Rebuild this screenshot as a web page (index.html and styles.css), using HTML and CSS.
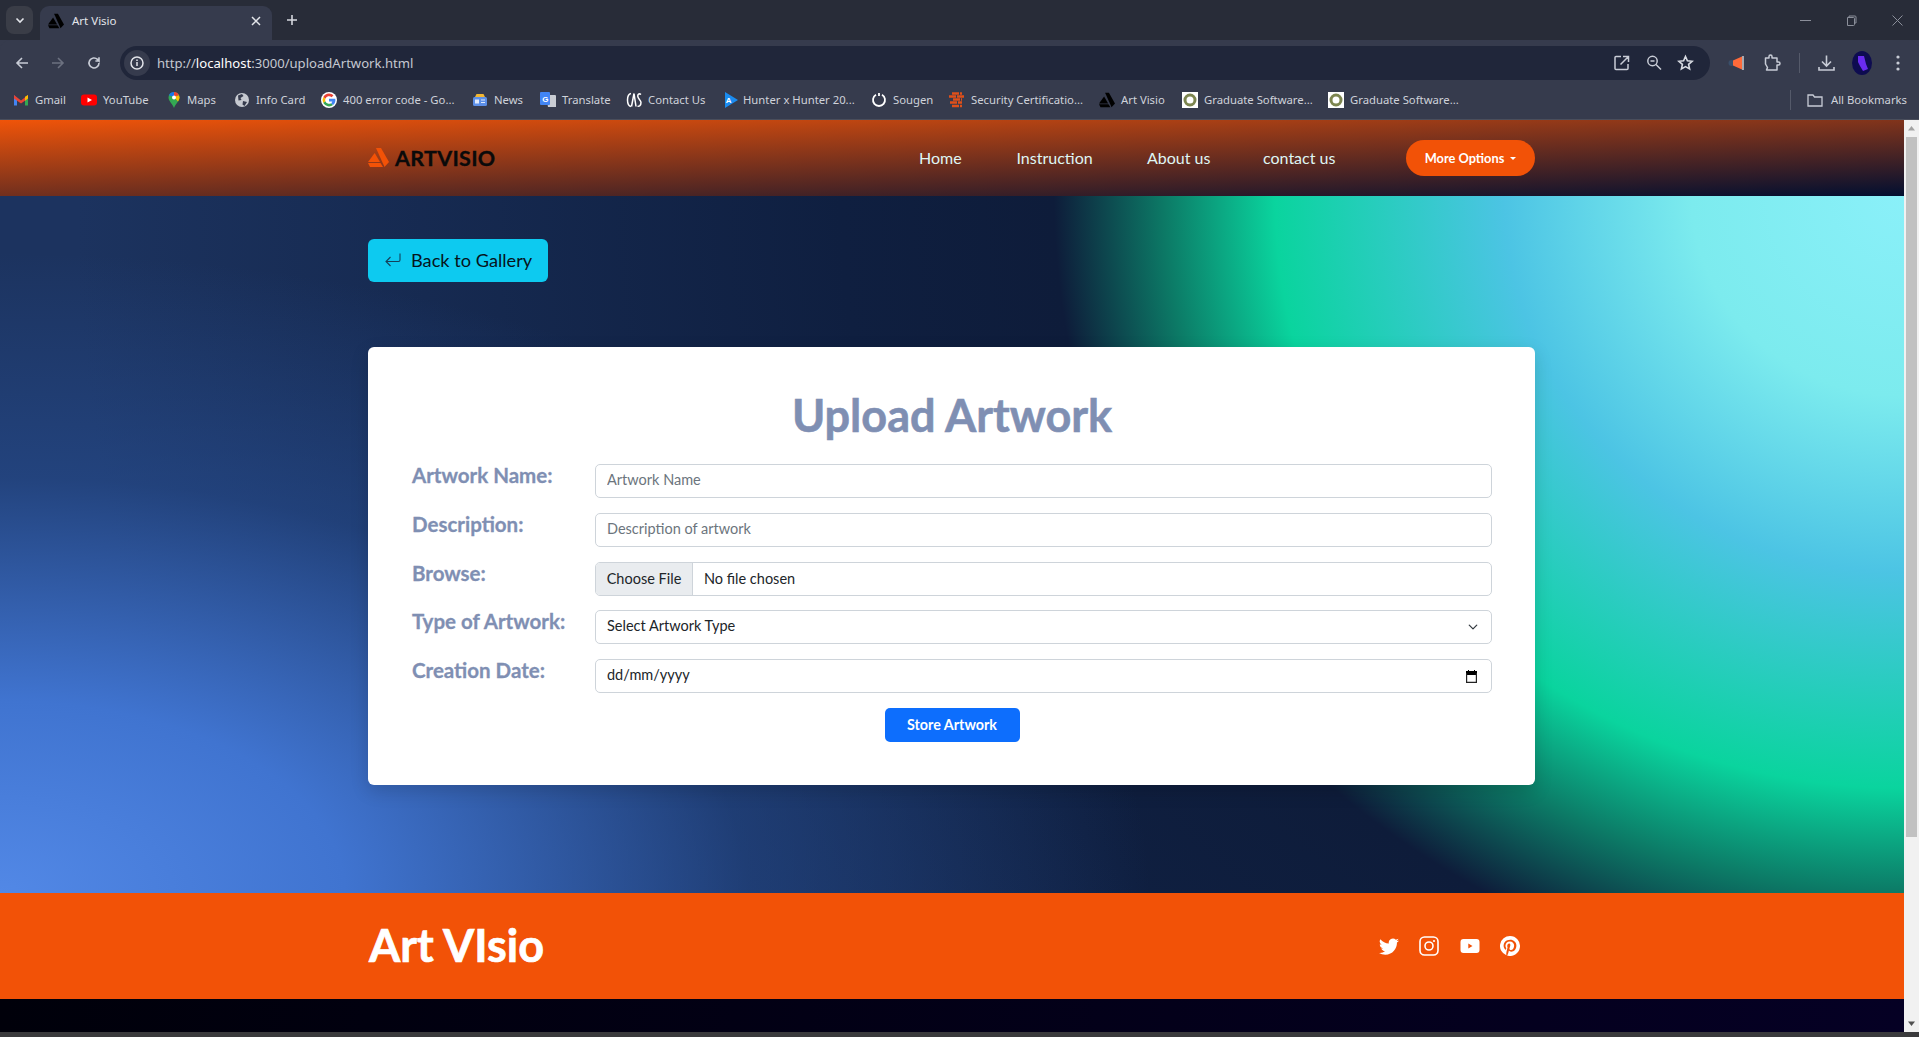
FILE: index.html
```html
<!DOCTYPE html>
<html lang="en">
<head>
<meta charset="utf-8">
<title>Art Visio</title>
<link rel="stylesheet" href="styles.css">
</head>
<body>
<div class="tabstrip">
  <div class="tabmenu"><svg width="12" height="12" viewBox="0 0 12 12"><path d="M2.5 4.5 6 8l3.5-3.5" fill="none" stroke="#e3e5ea" stroke-width="1.6"/></svg></div>
  <div class="tab">
    <svg class="fav" viewBox="0 0 21 19"><polygon points="8,0 13,0 21,14 16.5,19" fill="#000"/><polygon points="0,14 6.7,5 12,14" fill="#000"/><polygon points="0,15 12.5,15 15,19 2,19" fill="#000"/></svg>
    <span class="tabtitle">Art Visio</span>
    <svg class="tabclose" width="10" height="10" viewBox="0 0 10 10"><path d="M1 1l8 8M9 1l-8 8" stroke="#e3e5ea" stroke-width="1.5"/></svg>
  </div>
  <svg class="newtab" width="12" height="12" viewBox="0 0 12 12"><path d="M6 1v10M1 6h10" stroke="#d5d8de" stroke-width="1.6"/></svg>
  <div class="winctrls">
    <svg width="11" height="11" viewBox="0 0 11 11"><path d="M0 5.5h11" stroke="#8b8f9a"/></svg>
    <svg width="11" height="11" viewBox="0 0 11 11"><path d="M1.5 2.5h6a1 1 0 0 1 1 1v6a1 1 0 0 1-1 1h-6zM3 2.5V1h6a1 1 0 0 1 1 1v6H8.5" fill="none" stroke="#8b8f9a"/></svg>
    <svg width="11" height="11" viewBox="0 0 11 11"><path d="M.5.5l10 10M10.5.5l-10 10" stroke="#8b8f9a"/></svg>
  </div>
</div>
<div class="toolbar">
  <svg class="navicon" viewBox="0 0 16 16"><path d="M14 8H3M8 3 3 8l5 5" fill="none" stroke="#c8ccd6" stroke-width="1.6"/></svg>
  <svg class="navicon" viewBox="0 0 16 16"><path d="M2 8h11M8 3l5 5-5 5" fill="none" stroke="#6c7180" stroke-width="1.6"/></svg>
  <svg class="navicon" viewBox="0 0 16 16"><path d="M13 8a5 5 0 1 1-1.5-3.6L13 6V2.2M13 6H9.4" fill="none" stroke="#c8ccd6" stroke-width="1.6"/></svg>
  <div class="omnibox">
    <div class="siteinfo"><svg width="16" height="16" viewBox="0 0 16 16"><circle cx="8" cy="8" r="6" fill="none" stroke="#e2e4ea" stroke-width="1.5"/><path d="M8 7v4M8 4.6v1.4" stroke="#e2e4ea" stroke-width="1.5"/></svg></div>
    <span class="url"><span class="urldim">http://</span>localhost<span class="urldim">:3000/uploadArtwork.html</span></span>
    <div class="omniicons">
      <svg width="18" height="18" viewBox="0 0 18 18"><path d="M8 2.5H3a1 1 0 0 0-1 1v11a1 1 0 0 0 1 1h11a1 1 0 0 0 1-1V10M7.500 10.500 15.500 2.500M10 2.500h5.500V8" fill="none" stroke="#c8ccd6" stroke-width="1.5"/></svg>
      <svg width="16" height="18" viewBox="0 0 16 18"><circle cx="6.500" cy="7" r="4.700" fill="none" stroke="#c8ccd6" stroke-width="1.5"/><path d="M10 10.500l5 5M4.500 7h4" stroke="#c8ccd6" stroke-width="1.5"/></svg>
      <svg width="17" height="18" viewBox="0 0 17 18"><path d="M8.500 2.500l1.900 4.300 4.700.5-3.500 3.100 1 4.600-4.100-2.400-4.100 2.400 1-4.600L1.900 7.300l4.700-.5z" fill="none" stroke="#d8dbe2" stroke-width="1.6"/></svg>
    </div>
  </div>
  <div class="tools">
    <svg class="tool-mega" width="16" height="18" viewBox="0 0 16 18"><circle cx="3.500" cy="9" r="3" fill="#3a4f6a"/><path d="M5 6.500 14 2.500v13L5 11.500z" fill="#ff6a3a"/><path d="M15 2v14" stroke="#f2f2f2" stroke-width="1.200"/></svg>
    <svg class="tool-puzzle" width="17" height="18" viewBox="0 0 17 18"><path d="M1.500 4h3.500V2.500a1.500 1.500 0 0 1 3 0V4H13v4h1.500a1.500 1.500 0 0 1 0 3H13v5H2.500l1-2.500-2-3.500z" fill="none" stroke="#c8ccd6" stroke-width="1.500" stroke-linejoin="round"/></svg>
    <span class="tooldiv"></span>
    <svg class="tool-dl" width="17" height="18" viewBox="0 0 17 18"><path d="M8.500 1.500v10M4 7.500l4.500 4.500L13 7.500M1 13v3h15v-3" fill="none" stroke="#c8ccd6" stroke-width="1.600"/></svg>
    <svg class="tool-avatar" width="20" height="24" viewBox="0 0 20 24"><ellipse cx="10" cy="12" rx="10" ry="12" fill="#0e0c50"/><path d="M6 5h6l2 8 2 5-5 2-3-5-2-4z" fill="#6a2bf0"/></svg>
    <svg class="tool-dots" width="4" height="18" viewBox="0 0 4 18"><circle cx="2" cy="3" r="1.600" fill="#c8ccd6"/><circle cx="2" cy="9" r="1.600" fill="#c8ccd6"/><circle cx="2" cy="15" r="1.600" fill="#c8ccd6"/></svg>
  </div>
</div>
<div class="bookmarks">
  <div class="bmgrid">
    <a class="bm"><svg class="fav" viewBox="0 0 16 16"><path d="M1 3v10.500h3V7z" fill="#4285f4"/><path d="M15 3v10.500h-3V7z" fill="#34a853"/><path d="M1 3l7 5.500L15 3v3.500L8 11.500 1 6.500z" fill="#ea4335"/><path d="M12 4.800 15 3v3.500l-3 2.200z" fill="#fbbc04"/></svg><span>Gmail</span></a>
    <a class="bm"><svg class="fav" viewBox="0 0 16 16"><rect y="2.500" width="16" height="11" rx="3" fill="#f00"/><path d="M6.500 5.500v5L11 8z" fill="#fff"/></svg><span>YouTube</span></a>
    <a class="bm"><svg class="fav fav-pin" viewBox="2 0 13 16"><path d="M8 0a5.500 5.500 0 0 1 5.500 5.500C13.500 9 10 11 8 16 6 11 2.500 9 2.500 5.500A5.500 5.500 0 0 1 8 0z" fill="#34a853"/><path d="M3 3.300A5.500 5.500 0 0 1 8 0v5z" fill="#1a73e8"/><path d="M8 0a5.500 5.500 0 0 1 5 3.300L8 5z" fill="#ea4335"/><path d="M13.500 5.500c0 1.500-.7 2.800-1.500 4L8 5l5-1.700z" fill="#fbbc04"/><circle cx="8" cy="5.500" r="2" fill="#fff"/></svg><span>Maps</span></a>
    <a class="bm"><svg class="fav" viewBox="0 0 16 16"><circle cx="8" cy="8" r="7" fill="#c6c9d0"/><path d="M4 3.500 8 2l1.500 2-3 2 1 2-3 .5zM9 9l4 1-2.500 4-2-1.500z" fill="#363b4d"/></svg><span>Info Card</span></a>
    <a class="bm"><svg class="fav" viewBox="0 0 16 16"><circle cx="8" cy="8" r="8" fill="#fff"/><path d="M8 1.500a6.500 6.500 0 0 1 4.500 1.800l-1.900 1.900A3.800 3.800 0 0 0 4.400 6.800L2.300 5A6.500 6.500 0 0 1 8 1.500z" fill="#ea4335"/><path d="M2.300 5l2.100 1.800a3.800 3.800 0 0 0 0 2.400l-2.100 1.800a6.500 6.500 0 0 1 0-6z" fill="#fbbc05"/><path d="M2.300 11l2.100-1.800a3.800 3.800 0 0 0 5.700 2l2 1.700A6.500 6.500 0 0 1 2.300 11z" fill="#34a853"/><path d="M8 6.700h6.300a6.500 6.500 0 0 1-2.200 6.200l-2-1.700a2.700 2.700 0 0 0 1.200-1.800H8z" fill="#4285f4"/></svg><span>400 error code - Go...</span></a>
    <a class="bm"><svg class="fav" viewBox="0 0 16 16"><path d="M3 5 4.500 2h7L13 5z" fill="#f2b632"/><rect x="1" y="5" width="14" height="9" rx="1.500" fill="#5c8fe8"/><rect x="3" y="7.500" width="4" height="4" fill="#dfe9fb"/><path d="M9 8h4M9 10.500h4" stroke="#dfe9fb"/></svg><span>News</span></a>
    <a class="bm"><svg class="fav" viewBox="0 0 16 16"><path d="M6 3h9a1 1 0 0 1 1 1v11H8z" fill="#c9ccd3"/><rect width="10" height="13" rx="1" fill="#4285f4"/><text x="2.300" y="9.500" class="favtxt">G</text></svg><span>Translate</span></a>
    <a class="bm"><svg class="fav" viewBox="0 0 16 16"><path d="M5 1.500C2.500 2 1.500 5 1.500 8s1 6 3.500 6.500M5.500 14.500 8 1.500M8 1.500l2 13M15 2.500c-2-1.500-3.500 0-3.200 2 .3 2.500 3.200 3.500 3.200 6 0 3-2 4.500-3.500 3.500" fill="none" stroke="#fff" stroke-width="1.500"/></svg><span>Contact Us</span></a>
    <a class="bm bm-tight"><svg class="fav" viewBox="0 0 16 16"><path d="M2 0l13 8-13 8z" fill="#1a8cf0"/><text x="2.800" y="11" class="favtxt">A</text></svg><span>Hunter x Hunter 20...</span></a>
    <a class="bm"><svg class="fav" viewBox="0 0 16 16"><path d="M5 2.800a6 6 0 1 0 6 0" fill="none" stroke="#fff" stroke-width="1.800"/><path d="M8 1v3" stroke="#fff" stroke-width="1.800"/></svg><span>Sougen</span></a>
    <a class="bm"><svg class="fav" viewBox="0 0 16 16"><path d="M3 1.500h10M0 4.500h16M4 7.500h9M1 10.500h12M3 14h10" stroke="#e0501a" stroke-width="2.500" stroke-dasharray="7 1"/></svg><span>Security Certificatio...</span></a>
    <a class="bm"><svg class="fav" viewBox="0 0 21 19"><polygon points="8,0 13,0 21,14 16.500,19" fill="#000"/><polygon points="0,14 6.700,5 12,14" fill="#000"/><polygon points="0,15 12.500,15 15,19 2,19" fill="#000"/></svg><span>Art Visio</span></a>
    <a class="bm"><svg class="fav" viewBox="0 0 16 16"><rect width="16" height="16" fill="#fff"/><circle cx="8" cy="8" r="5" fill="none" stroke="#7d8650" stroke-width="3"/></svg><span>Graduate Software...</span></a>
    <a class="bm"><svg class="fav" viewBox="0 0 16 16"><rect width="16" height="16" fill="#fff"/><circle cx="8" cy="8" r="5" fill="none" stroke="#7d8650" stroke-width="3"/></svg><span>Graduate Software...</span></a>
  </div>
  <div class="allbm">
    <svg class="fav" viewBox="0 0 16 16"><path d="M1 3h5l1.500 2H15v9H1z" fill="none" stroke="#c8ccd6" stroke-width="1.300"/></svg>
    <span>All Bookmarks</span>
  </div>
</div>
<div class="viewport">
  <div class="page">
    <header class="navbar">
      <div class="wrap navwrap">
        <a class="logo">
          <svg width="21" height="19" viewBox="0 0 21 19"><polygon points="8,0 13,0 21,14 16.500,19" fill="#f25207"/><polygon points="0,14 6.700,5 12,14" fill="#f25207"/><polygon points="0,15 12.500,15 15,19 2,19" fill="#f25207"/></svg>
          <span>ARTVISIO</span>
        </a>
        <nav class="menu">
          <a class="m-home">Home</a>
          <a class="m-ins">Instruction</a>
          <a class="m-about">About us</a>
          <a class="m-contact">contact us</a>
        </nav>
        <button class="morebtn">More Options<i class="caret"></i></button>
      </div>
    </header>
    <main class="main">
      <div class="wrap">
        <a class="backbtn">
          <svg width="16" height="16" viewBox="0 0 16 16"><path d="M15 1.500V8a1.500 1.500 0 0 1-1.500 1.500H1M5.500 5 1 9.500 5.500 14" fill="none" stroke="#14405a" stroke-width="1.100"/></svg>
          <span>Back to Gallery</span>
        </a>
        <form class="card">
          <h1>Upload Artwork</h1>
          <div class="row"><label>Artwork Name:</label><input class="ctl" type="text" placeholder="Artwork Name"></div>
          <div class="row"><label>Description:</label><input class="ctl" type="text" placeholder="Description of artwork"></div>
          <div class="row"><label>Browse:</label><input class="ctl ctl-file" type="file"></div>
          <div class="row"><label>Type of Artwork:</label><select class="ctl ctl-select"><option>Select Artwork Type</option></select></div>
          <div class="row"><label>Creation Date:</label><input class="ctl ctl-date" type="text" value="dd/mm/yyyy"></div>
          <div class="actions"><button type="button" class="storebtn">Store Artwork</button></div>
        </form>
      </div>
    </main>
    <footer class="footer">
      <div class="wrap footwrap">
        <div class="brand">Art VIsio</div>
        <div class="social">
          <svg viewBox="0 0 16 16"><path d="M5.026 15c6.038 0 9.341-5.003 9.341-9.334 0-.14 0-.282-.006-.422A6.685 6.685 0 0 0 16 3.542a6.658 6.658 0 0 1-1.889.518 3.301 3.301 0 0 0 1.447-1.817 6.533 6.533 0 0 1-2.087.793A3.286 3.286 0 0 0 7.875 6.030a9.325 9.325 0 0 1-6.767-3.429 3.289 3.289 0 0 0 1.018 4.382A3.323 3.323 0 0 1 .64 6.575v.045a3.288 3.288 0 0 0 2.632 3.218 3.203 3.203 0 0 1-.865.115 3.230 3.230 0 0 1-.614-.057 3.283 3.283 0 0 0 3.067 2.277A6.588 6.588 0 0 1 .78 13.580a6.320 6.320 0 0 1-.78-.045A9.344 9.344 0 0 0 5.026 15z"/></svg>
          <svg viewBox="0 0 20 20"><rect x="1" y="1" width="18" height="18" rx="4.500" fill="none" stroke="#fff" stroke-width="1.600"/><circle cx="10" cy="10" r="4" fill="none" stroke="#fff" stroke-width="1.600"/><circle cx="15" cy="5" r="1.100"/></svg>
          <svg viewBox="0 0 20 20"><path fill-rule="evenodd" d="M3.500 3h13A3 3 0 0 1 19.500 6v8a3 3 0 0 1-3 3h-13a3 3 0 0 1-3-3V6a3 3 0 0 1 3-3zM8.300 7.500v5L12.500 10z"/></svg>
          <svg viewBox="0 0 16 16"><path d="M8 0a8 8 0 0 0-2.915 15.452c-.07-.633-.134-1.606.027-2.297.146-.625.938-3.977.938-3.977s-.239-.479-.239-1.187c0-1.113.645-1.943 1.448-1.943.682 0 1.012.512 1.012 1.127 0 .686-.437 1.712-.663 2.663-.188.796.4 1.446 1.185 1.446 1.422 0 2.515-1.500 2.515-3.664 0-1.915-1.377-3.254-3.342-3.254-2.276 0-3.612 1.707-3.612 3.471 0 .688.265 1.425.595 1.826a.24.24 0 0 1 .056.23c-.061.252-.196.796-.222.907-.035.146-.116.177-.268.107-1-.465-1.624-1.926-1.624-3.100 0-2.523 1.834-4.840 5.286-4.840 2.775 0 4.932 1.977 4.932 4.620 0 2.757-1.739 4.976-4.151 4.976-.811 0-1.573-.421-1.834-.919l-.498 1.902c-.181.695-.669 1.566-.995 2.097A8 8 0 1 0 8 0z"/></svg>
        </div>
      </div>
    </footer>
    <div class="darkstrip"></div>
  </div>
  <div class="scrollbar">
    <svg width="15" height="17" viewBox="0 0 15 17"><path d="M7.500 6 11 10.500H4z" fill="#a3a3a3"/></svg>
    <div class="thumb"></div>
    <svg width="15" height="17" viewBox="0 0 15 17"><path d="M7.500 11 11 6.500H4z" fill="#505050"/></svg>
  </div>
</div>
<div class="winedge"></div>
</body>
</html>
```
FILE: styles.css
```css
* { box-sizing: border-box; }
html, body { margin: 0; height: 100%; }
body {
  display: flex;
  flex-direction: column;
  overflow: hidden;
  font-family: "Lato", "Noto Sans", sans-serif;
  background: #363b4d;
}

/* browser chrome */
.tabstrip {
  height: 40px;
  flex: none;
  display: flex;
  align-items: flex-end;
  padding-left: 6px;
  background: #282c38;
}
.tabmenu {
  width: 27px;
  height: 28px;
  margin-bottom: 6px;
  margin-right: 7px;
  border-radius: 8px;
  background: #3a3d47;
  display: flex;
  align-items: center;
  justify-content: center;
}
.tab {
  width: 232px;
  height: 34px;
  padding: 0 11px 5px 8px;
  border-radius: 9px 9px 0 0;
  background: #363b4d;
  display: flex;
  align-items: center;
  gap: 8px;
  color: #e3e5ea;
  font: 11.500px "Noto Sans", sans-serif;
}
.tabtitle { flex: 1; }
.newtab { margin: 0 0 14px 14px; }
.winctrls {
  margin-left: auto;
  margin-bottom: 14px;
  margin-right: 16px;
  display: flex;
  gap: 35px;
}
.fav { width: 16px; height: 16px; flex: none; }
.fav-pin { width: 13px; }
.favtxt { font: 700 8px "Liberation Sans", sans-serif; fill: #fff; }

.toolbar {
  height: 40px;
  flex: none;
  display: flex;
  align-items: center;
  padding: 6px 0 0 14px;
  background: #363b4d;
  border-radius: 10px 10px 0 0;
}
.navicon { width: 16px; height: 16px; margin-right: 20px; flex: none; }
.omnibox {
  width: 1590px;
  height: 34px;
  margin-left: -2px;
  border-radius: 17px;
  background: #20263a;
  display: flex;
  align-items: center;
  padding-left: 4px;
  padding-right: 16px;
}
.siteinfo {
  width: 26px;
  height: 26px;
  border-radius: 50%;
  background: #363b4d;
  display: flex;
  align-items: center;
  justify-content: center;
  margin-right: 7px;
}
.url { font: 13.100px "Noto Sans", sans-serif; color: #fff; }
.urldim { color: #c5c8d0; }
.omniicons { margin-left: auto; display: flex; align-items: center; gap: 15px; }
.tools { display: flex; align-items: center; margin-left: 18px; }
.tool-puzzle { margin-left: 20px; }
.tooldiv { width: 1px; height: 20px; background: #555a6a; margin: 0 18px; }
.tool-avatar { margin-left: 17px; }
.tool-dots { margin-left: 24px; }

.bookmarks {
  height: 40px;
  flex: none;
  display: flex;
  align-items: center;
  padding-left: 13px;
  background: #363b4d;
  border-bottom: 1px solid #4a4e5c;
  color: #cfd2da;
  font: 11.300px "Noto Sans", sans-serif;
}
.bmgrid {
  display: grid;
  grid-template-columns: 68px 87px 66px 87px 151px 68px 86px 97px 148px 78px 150px 83px 146px 140px;
}
.bm { display: flex; align-items: center; gap: 6px; white-space: nowrap; }
.bm-tight { gap: 4px; }
.allbm {
  margin-left: auto;
  margin-right: 12px;
  padding-left: 16px;
  height: 20px;
  border-left: 1px solid #555a6a;
  display: flex;
  align-items: center;
  gap: 8px;
}

/* viewport */
.viewport { flex: 1; min-height: 0; display: flex; }
.page { flex: 1; min-width: 0; display: flex; flex-direction: column; }
.scrollbar {
  width: 15px;
  flex: none;
  background: #f1f1f1;
  display: flex;
  flex-direction: column;
}
.thumb { height: 700px; margin: 0 2px 0 2px; background: #c1c1c1; }
.scrollbar svg:last-child { margin-top: auto; }
.winedge { height: 5px; flex: none; background: #3a3a3c; }

.wrap { width: 1167px; margin: 0 0 0 368px; }

.navbar {
  height: 76px;
  flex: none;
  background: linear-gradient(178deg, #f05409 0%, #020f30 100%);
}
.navwrap { height: 100%; display: flex; align-items: center; }
.logo { display: flex; align-items: center; gap: 6px; margin-top: -1px; color: #0a0a0a; }
.logo span { font-size: 21.500px; font-weight: 700; letter-spacing: .3px; -webkit-text-stroke: .3px #0a0a0a; }
.menu { margin-left: auto; margin-bottom: 2px; display: flex; color: #dff6f4; font-size: 16px; }
.menu a { display: block; text-align: left; white-space: nowrap; }
.m-home { width: 97.500px; }
.m-ins { width: 130.500px; }
.m-about { width: 116px; }
.m-contact { width: 143px; }
.morebtn {
  width: 129px;
  height: 36px;
  border: 0;
  border-radius: 18px;
  background: #f25207;
  color: #fff;
  font: 700 12.800px "Lato", sans-serif;
  display: flex;
  align-items: center;
  justify-content: center;
  gap: 6px;
}
.caret {
  width: 0;
  height: 0;
  border-left: 3.500px solid transparent;
  border-right: 3.500px solid transparent;
  border-top: 3.500px solid #fff;
}

.main {
  height: 697px;
  flex: none;
  padding-top: 43px;
  background-color: #172a52;
  background-image:
    radial-gradient(ellipse 1150px 640px at 0 100%, #5288e6 0%, #4074d0 30%, rgba(40, 80, 150, .55) 65%, rgba(23, 42, 82, 0) 100%),
    radial-gradient(ellipse 850px 800px at 100% 0, #8af0f9 0%, #7cebee 25%, #4cc4e4 47%, #0ad49e 74%, #0c7a66 87%, #0e1c3a 100%, #0f1f40 125%, #1c335f 215%);
}
.backbtn {
  width: 180px;
  height: 43px;
  padding: 0 0 2px 17px;
  border-radius: 6px;
  background: #0dcaf0;
  color: #06141c;
  font-size: 18.200px;
  display: flex;
  align-items: center;
  gap: 10px;
}
.card {
  margin-top: 65px;
  height: 438px;
  padding: 42px 43px 43px 44px;
  background: #fff;
  border-radius: 6px;
  box-shadow: 0 6px 18px rgba(0, 0, 0, .15);
}
h1 {
  margin: 0 0 21px;
  height: 54px;
  line-height: 52px;
  text-align: center;
  color: #7f8fb3;
  font-size: 45px;
  font-weight: 700;
  -webkit-text-stroke: .6px #7f8fb3;
}
.row {
  display: grid;
  grid-template-columns: 183px 1fr;
  margin-bottom: 14.750px;
}
label {
  line-height: 23px;
  font-size: 20.500px;
  font-weight: 700;
  color: #7f8fb3;
  -webkit-text-stroke: .3px #7f8fb3;
}
.ctl {
  width: 100%;
  height: 34px;
  padding: 0 11px 3px;
  border: 1px solid #ced4da;
  border-radius: 5px;
  background-color: #fff;
  color: #212529;
  font: 14.500px "Lato", sans-serif;
  outline: 0;
}
.ctl::placeholder { color: #6c757d; opacity: 1; }
.ctl-file { padding: 0; }
.ctl-file::file-selector-button {
  width: 97px;
  height: 32px;
  margin-right: 11px;
  padding-bottom: 2px;
  border: 0;
  border-right: 1px solid #ced4da;
  background: #e9ecef;
  color: #212529;
  font: 14.500px "Lato", sans-serif;
}
.ctl-select {
  appearance: none;
  background-image: url("data:image/svg+xml,%3csvg xmlns='http://www.w3.org/2000/svg' viewBox='0 0 16 16'%3e%3cpath fill='none' stroke='%23343a40' stroke-linecap='round' stroke-linejoin='round' stroke-width='2' d='m2 5 6 6 6-6'/%3e%3c/svg%3e");
  background-repeat: no-repeat;
  background-position: right 12px center;
  background-size: 12px 10px;
}
.ctl-date {
  background-image: url("data:image/svg+xml,%3csvg xmlns='http://www.w3.org/2000/svg' viewBox='0 0 11 13'%3e%3cpath d='M2.500 0v2M8.500 0v2M0 1.500h11v3H0z' fill='%23000' stroke='%23000'/%3e%3cpath d='M.6 3v9.400h9.800V3' fill='none' stroke='%23222' stroke-width='1.200'/%3e%3c/svg%3e");
  background-repeat: no-repeat;
  background-position: right 14px center;
  background-size: 11px 13px;
}
.actions { display: flex; justify-content: center; margin-top: 15px; }
.storebtn {
  width: 135px;
  height: 34px;
  padding-bottom: 3px;
  border: 0;
  border-radius: 5px;
  background: #0d6efd;
  color: #fff;
  font: 700 14.300px "Lato", sans-serif;
}

.footer { height: 106px; flex: none; background: #f25207; }
.footwrap { height: 100%; display: flex; align-items: center; justify-content: space-between; }
.brand {
  color: #fff;
  font-size: 45px;
  font-weight: 700;
  line-height: 1;
  padding: 0 0 2px 1px;
  -webkit-text-stroke: .7px #fff;
}
.social { display: flex; gap: 20.500px; padding-right: 15px; }
.social svg { width: 20px; height: 20px; fill: #fff; }
.darkstrip { flex: 1; background: linear-gradient(90deg, #00000a, #050024); }
```
